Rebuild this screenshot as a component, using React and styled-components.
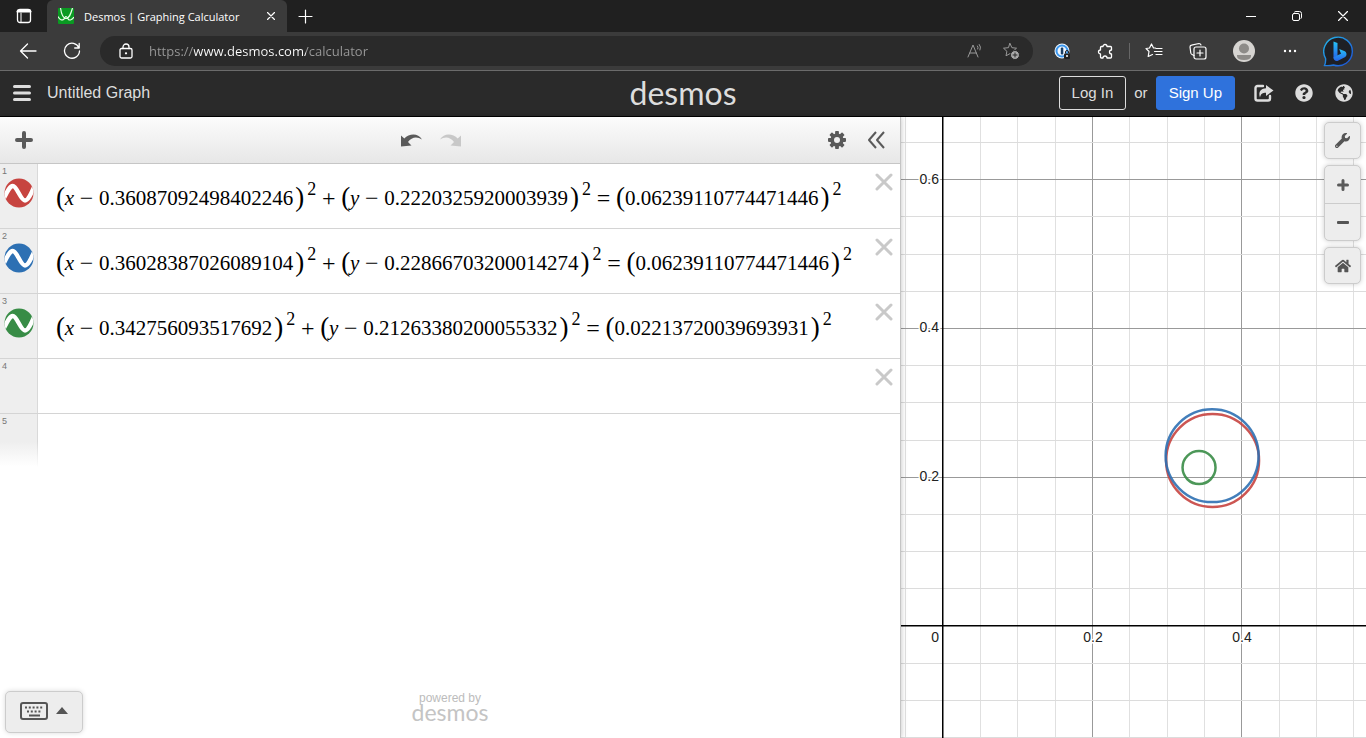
import React from "react";
import styled, { createGlobalStyle } from "styled-components";
import { FaWrench, FaHome, FaQuestionCircle, FaGlobeAmericas } from "react-icons/fa";

const GlobalStyle = createGlobalStyle`
  * { box-sizing: border-box; }
  body {
    margin: 0;
    background: #fff;
    font-family: "Liberation Sans", Arial, sans-serif;
  }
  button, input { font: inherit; color: inherit; }
`;

const Page = styled.div`
  display: flex;
  flex-direction: column;
  height: 100vh;
  overflow: hidden;
`;

/* ---------- browser window ---------- */

const TabStrip = styled.div`
  flex: none;
  display: flex;
  align-items: center;
  height: 32px;
  background: #202020;
  color: #fff;
  font-family: "Open Sans", "Noto Sans", sans-serif;
`;

const IconButton = styled.button`
  flex: none;
  display: flex;
  align-items: center;
  justify-content: center;
  width: ${(p) => p.$w || 46}px;
  height: ${(p) => p.$h || 32}px;
  padding: 0;
  border: 0;
  background: none;
  color: ${(p) => p.$color || "#fff"};
`;

const Tab = styled.div`
  display: flex;
  align-items: center;
  width: 240px;
  height: 32px;
  padding: 0 4px 0 11px;
  border-radius: 6px 6px 0 0;
  background: #3b3b3b;
`;

const TabTitle = styled.span`
  flex: 1;
  margin-left: 10px;
  font-size: 11px;
  white-space: nowrap;
`;

const Spacer = styled.div`
  flex: 1;
`;

const BrowserBar = styled.div`
  flex: none;
  display: flex;
  align-items: center;
  height: 39px;
  padding: 0 2px 0 6px;
  border-bottom: 1px solid #6b6b6b;
  background: #3b3b3b;
  color: #fff;
`;

const AddressBox = styled.div`
  flex: 1;
  display: flex;
  align-items: center;
  height: 30px;
  margin: 0 7px 0 6px;
  padding: 0 4px 0 8px;
  border-radius: 15px;
  background: #2a2a2a;
`;

const AddressInput = styled.input`
  flex: 1;
  min-width: 0;
  height: 30px;
  margin-left: 5px;
  padding: 0;
  border: 0;
  outline: 0;
  font-family: "Open Sans", "Noto Sans", sans-serif;
  font-size: 13px;
  background: linear-gradient(90deg, #9a9a9a 45px, #fff 45px, #fff 157px, #9a9a9a 157px);
  background-clip: text;
  -webkit-background-clip: text;
  -webkit-text-fill-color: transparent;
`;

const BarDivider = styled.div`
  width: 1px;
  height: 16px;
  margin: 0 2px;
  background: #666;
`;

/* ---------- calculator header ---------- */

const Header = styled.header`
  flex: none;
  display: grid;
  grid-template-columns: 1fr auto 1fr;
  align-items: center;
  height: 46px;
  padding: 0 12px 2px;
  border-bottom: 1px solid #000;
  background: #2a2a2a;
  color: #ddd;
`;

const HeaderLeft = styled.div`
  display: flex;
  align-items: center;
  margin-left: -9px;
`;

const GraphTitle = styled.h1`
  margin: 0 0 0 6px;
  font-size: 16px;
  font-weight: 400;
`;

const Wordmark = styled.div`
  font-family: Lato, "Open Sans", sans-serif;
  font-size: ${(p) => p.$size}px;
  line-height: ${(p) => p.$size - 6}px;
  color: ${(p) => p.$color};
`;

const HeaderRight = styled.div`
  display: flex;
  align-items: center;
  justify-content: flex-end;
  gap: 8px;
  font-size: 15px;
`;

const AccountButton = styled.button`
  height: 34px;
  padding: 0 12px;
  border: 1px solid ${(p) => (p.$primary ? "#2f72dc" : "#ddd")};
  border-radius: 3px;
  background: ${(p) => (p.$primary ? "#2f72dc" : "transparent")};
  color: ${(p) => (p.$primary ? "#fff" : "#ddd")};
`;

const HeaderIcons = styled.div`
  display: flex;
  align-items: center;
  gap: 20px;
  margin-left: 11px;
`;

/* ---------- expression panel ---------- */

const Workspace = styled.main`
  flex: 1;
  min-height: 0;
  display: grid;
  grid-template-columns: minmax(0, 901fr) minmax(0, 465fr);
`;

const Panel = styled.section`
  position: relative;
  z-index: 1;
  display: flex;
  flex-direction: column;
  border-right: 1px solid #c4c4c4;
  background: #fff;
  box-shadow: 0 0 6px rgba(0, 0, 0, 0.25);
`;

const PanelBar = styled.div`
  flex: none;
  display: grid;
  grid-template-columns: 1fr auto 1fr;
  align-items: center;
  height: 47px;
  padding: 0 5px;
  border-bottom: 1px solid #c6c6c6;
  background: linear-gradient(#fcfcfc, #e7e7e7);
`;

const BarGroup = styled.div`
  display: flex;
  gap: 1px;
  justify-content: ${(p) => p.$align || "flex-start"};
  padding-right: ${(p) => (p.$offset ? 38 : 0)}px;
`;

const Rows = styled.ol`
  flex: 1;
  margin: 0;
  padding: 0;
  list-style: none;
`;

const Row = styled.li`
  display: flex;
  height: ${(p) => (p.$filled ? 65 : 55)}px;
  border-bottom: ${(p) => (p.$last ? "0" : "1px solid #d4d4d4")};
`;

const Gutter = styled.div`
  flex: none;
  width: 38px;
  padding: 2px 0 0 2px;
  border-right: 1px solid #d9d9d9;
  background: ${(p) =>
    p.$fade ? "linear-gradient(#eee 50%, #fff 95%)" : "#eee"};
  color: #777;
  font-size: 9px;
  line-height: 10px;
  ${(p) => p.$fade && "border-image: linear-gradient(#d9d9d9 50%, #fff 95%) 1;"}
`;

const CurveButton = styled.button`
  display: block;
  width: 32px;
  height: 32px;
  margin-top: 1px;
  padding: 1px 0 0 1px;
  border: 0;
  background: none;
`;

const Formula = styled.div`
  flex: 1;
  display: flex;
  align-items: center;
  padding: 3px 0 0 18px;
  font-family: "Liberation Serif", "Times New Roman", serif;
  font-size: 21px;
  line-height: 24px;
  color: #000;
  white-space: nowrap;
`;

const Paren = styled.span`
  width: ${(p) => (p.$close ? 9 : 8)}px;
  margin-right: ${(p) => (p.$close ? 3 : 0)}px;
  margin-bottom: 2px;
  font-size: 27px;
`;

const Variable = styled.i`
  width: 11px;
  text-align: center;
`;

const Operator = styled.span`
  width: ${(p) => p.$w || 23}px;
  font-size: 24px;
  text-align: center;
`;

const Value = styled.span`
  padding: 0 2px 0 1px;
`;

const Power = styled.sup`
  align-self: flex-start;
  margin-top: 12px;
  font-size: 18px;
  line-height: 20px;
`;

const EmptyInput = styled.input`
  flex: 1;
  min-width: 0;
  padding: 0 18px;
  border: 0;
  outline: 0;
  background: none;
`;

const PoweredBy = styled.div`
  display: flex;
  flex-direction: column;
  align-items: center;
  padding-bottom: 17px;
  color: #bcbcbc;
  font-size: 12px;
  line-height: 12px;
`;

const KeypadButton = styled.button`
  position: absolute;
  left: 5px;
  bottom: 5px;
  display: flex;
  align-items: center;
  gap: 8px;
  width: 78px;
  height: 42px;
  padding: 0 14px 3px;
  border: 1px solid #ccc;
  border-radius: 5px;
  background: #ededed;
  box-shadow: 0 0 5px rgba(0, 0, 0, 0.15);
`;

/* ---------- graph paper ---------- */

const GraphArea = styled.section`
  position: relative;
  overflow: hidden;
  background: #fff;
`;

const Plot = styled.svg`
  display: block;
  width: 100%;
  height: 100%;
`;

const GraphTools = styled.div`
  position: absolute;
  top: 5px;
  right: 5px;
  display: flex;
  flex-direction: column;
  gap: 6px;
`;

const ToolGroup = styled.div`
  border: 1px solid #ccc;
  border-radius: 5px;
  background: #ededed;
  box-shadow: 0 0 5px rgba(0, 0, 0, 0.2);
  button + button { border-top: 1px solid #ccc; }
`;

const ToolButton = styled.button`
  display: flex;
  align-items: center;
  justify-content: center;
  width: 35px;
  height: ${(p) => p.$h || 35}px;
  padding: 0;
  border: 0;
  background: none;
  color: #555;
`;

/* ---------- icons ---------- */

const Line = ({ size = 18, w = 1, children, box = 18, ...rest }) => (
  <svg width={size} height={size} viewBox={`0 0 ${box} ${box}`} fill="none"
    stroke="currentColor" strokeWidth={w} strokeLinecap="round" strokeLinejoin="round" aria-hidden="true" {...rest}>
    {children}
  </svg>
);

const Favicon = () => (
  <svg width="16" height="16" viewBox="0 0 16 16" aria-hidden="true">
    <rect width="16" height="16" rx="1" fill="#0a9a22" />
    <path d="M2.500 0C3.500 7 5 10.500 8 10.500S12.500 7 14.500 0M0 8.500C2 12 4 12.500 5.500 11.500S7 8.500 8 8.500S9.500 10.500 10.500 11.500S14 12 16 9" fill="none" stroke="#e8ffe8" strokeWidth="1.200" />
  </svg>
);

const TabsIcon = () => (
  <Line size={16} box={16} w={1.3}>
    <rect x="1.500" y="1.500" width="13" height="13" rx="2.500" />
    <path d="M1.500 3.500h13M2 2.500h12" strokeWidth="2.200" />
    <path d="M5 5v9" strokeWidth="1" />
  </Line>
);

const star = "M8 1.500l1.900 4.200 4.600.5-3.400 3.100.9 4.500L8 11.600l-4 2.200.9-4.500L1.500 6.200l4.600-.5z";

const BingIcon = () => (
  <svg width="31" height="31" viewBox="0 0 31 31" aria-hidden="true">
    <defs>
      <linearGradient id="ring" x1="0" y1="0" x2="1" y2="1">
        <stop offset="0" stopColor="#23b5e8" />
        <stop offset="1" stopColor="#1d4fd7" />
      </linearGradient>
      <linearGradient id="mark" x1="0" y1="0" x2="0" y2="1">
        <stop offset="0" stopColor="#27c3f5" />
        <stop offset="1" stopColor="#2563eb" />
      </linearGradient>
    </defs>
    <path d="M1.500 29.500C2.600 27 2.800 25 2.600 22.500A14.300 14.300 0 1 1 10.500 29C8 29.600 5 29.800 1.500 29.500z" fill="#1e2026" stroke="url(#ring)" strokeWidth="1.400" />
    <path d="M10.500 5.500l4 1.600v12.400l-4 3z" fill="url(#mark)" />
    <path d="M10.500 21.500l4-2.200 3.500-1.500-1.800-4.800 5 2c2.600 1 3.200 4.300 1 6L15 24.800c-2.200.9-4.500-.8-4.500-3.300z" fill="url(#mark)" />
  </svg>
);

const GearIcon = () => (
  <svg width="18" height="18" viewBox="-9 -9 18 18" aria-hidden="true">
    {[0, 45, 90, 135].map((a) => (
      <rect key={a} x="-1.900" y="-9" width="3.800" height="18" rx="0.800" fill="#5a5a5a" transform={`rotate(${a})`} />
    ))}
    <circle r="6.600" fill="#5a5a5a" />
    <circle r="3" fill="#f1f1f1" />
  </svg>
);

const ArrowIcon = ({ flip, color }) => (
  <svg width="21" height="13" viewBox="0 0 21 13" aria-hidden="true">
    <path d="M0 1.500L3.300 4.500C8-.5 17-1.500 21 5.500C16 2 10.500 3 7 8L10.500 11.500L0 12.500z" fill={color}
      transform={flip ? "translate(21 0) scale(-1 1)" : undefined} />
  </svg>
);

const PlusIcon = ({ size, w }) => (
  <svg width={size} height={size} viewBox={`0 0 ${size} ${size}`} stroke="#5a5a5a" strokeWidth={w} strokeLinecap="round" aria-hidden="true">
    <path d={`M${size / 2} ${w / 2}V${size - w / 2}M${w / 2} ${size / 2}H${size - w / 2}`} />
  </svg>
);

const CurveIcon = ({ color, id }) => (
  <svg width="30" height="30" viewBox="0 0 30 30" aria-hidden="true">
    <clipPath id={id}><circle cx="15" cy="15" r="14.500" /></clipPath>
    <circle cx="15" cy="15" r="14.500" fill={color} />
    <path clipPath={`url(#${id})`} d="M0 20C4 12 6 8 8.800 8C13 8 16.500 22.500 21 22.500C24 22.500 26.500 17 30 9" fill="none" stroke="#fff" strokeWidth="4.300" />
  </svg>
);

const ShareIcon = () => (
  <svg width="20" height="18" viewBox="0 0 20 18" aria-hidden="true">
    <path d="M9 2H3.500A2 2 0 0 0 1.500 4v10.500a2 2 0 0 0 2 2h10.500a2 2 0 0 0 2-2V12" fill="none" stroke="#ddd" strokeWidth="2.400" strokeLinecap="round" />
    <path d="M12 1l7.500 5.500L12 12V8.800C8.500 8.800 6.800 9.800 6 13.500C4 8 6.800 4.300 12 4.200z" fill="#ddd" />
  </svg>
);

const KeyboardIcon = () => (
  <svg width="28" height="18" viewBox="0 0 28 18" aria-hidden="true">
    <rect x="1" y="1" width="26" height="16" rx="2" fill="none" stroke="#555" strokeWidth="2" />
    <path d="M5 5.500h19M7 9.500h15" stroke="#555" strokeWidth="2" strokeDasharray="2 1.800" />
    <path d="M9 13.500h11" stroke="#555" strokeWidth="2" />
  </svg>
);

const DeleteButton = () => (
  <IconButton $w={32} $h={36} $color="#c9c9c9" aria-label="Delete expression">
    <Line size={18} box={18} w={3}><path d="M2 2l14 14M16 2L2 16" /></Line>
  </IconButton>
);

/* ---------- data ---------- */

const circles = [
  { color: "#c74440", cx: "0.36087092498402246", cy: "0.2220325920003939", r: "0.06239110774471446" },
  { color: "#2d70b3", cx: "0.36028387026089104", cy: "0.22866703200014274", r: "0.06239110774471446" },
  { color: "#388c46", cx: "0.342756093517692", cy: "0.21263380200055332", r: "0.02213720039693931" },
];

const Squared = ({ name, value }) => (
  <>
    <Paren>(</Paren>
    {name && <><Variable>{name}</Variable><Operator>−</Operator></>}
    <Value>{value}</Value>
    <Paren $close>)</Paren>
    <Power>2</Power>
  </>
);

const UNIT = 745;
const ORIGIN = { x: 42, y: 509 };
const steps = (from, to) => Array.from({ length: to - from + 1 }, (_, i) => from + i);

function GraphPaper() {
  return (
    <Plot role="img" aria-label="Graph of three circles">
      <g shapeRendering="crispEdges">
        {steps(-1, 60).map((n) => n !== 0 && (
          <rect key={`v${n}`} x={Math.floor(ORIGIN.x + n * 37.36)} y="0" width="1" height="100%" fill={n % 4 ? "#e0e0e0" : "#999"} />
        ))}
        {steps(-30, 13).map((n) => n !== 0 && (
          <rect key={`h${n}`} x="0" y={Math.floor(ORIGIN.y - n * 37.2)} width="100%" height="1" fill={n % 4 ? "#dcdcdc" : "#999"} />
        ))}
      </g>
      <rect x={ORIGIN.x - 1} y="0" width="1.500" height="100%" fill="#000" />
      <rect x="0" y={ORIGIN.y - 1} width="100%" height="1.500" fill="#000" />
      {circles.map((c) => (
        <circle key={c.cx} cx={ORIGIN.x + c.cx * (UNIT + 2)} cy={ORIGIN.y - c.cy * UNIT} r={c.r * UNIT}
          fill="none" stroke={c.color} strokeWidth="2.500" strokeOpacity="0.900" />
      ))}
      <g fontFamily="Liberation Sans, Arial, sans-serif" fontSize="14" fill="#222" stroke="#fff" strokeWidth="3" paintOrder="stroke">
        <text x="38" y="525" textAnchor="end">0</text>
        <text x="192" y="525" textAnchor="middle">0.2</text>
        <text x="341" y="525" textAnchor="middle">0.4</text>
        <text x="38" y="364" textAnchor="end">0.2</text>
        <text x="38" y="215" textAnchor="end">0.4</text>
        <text x="38" y="67" textAnchor="end">0.6</text>
      </g>
    </Plot>
  );
}

export default function App() {
  return (
    <Page>
      <GlobalStyle />
      <TabStrip>
        <IconButton $w={47} aria-label="Tab actions"><TabsIcon /></IconButton>
        <Tab>
          <Favicon />
          <TabTitle>Desmos | Graphing Calculator</TabTitle>
          <IconButton $w={24} $h={24} aria-label="Close tab">
            <Line size={8} box={8} w={1.2}><path d="M.5.5l7 7M7.500.5l-7 7" /></Line>
          </IconButton>
        </Tab>
        <IconButton $w={36} aria-label="New tab">
          <Line size={15} box={15} w={1.2}><path d="M7.500 1v13M1 7.500h13" /></Line>
        </IconButton>
        <Spacer />
        <IconButton aria-label="Minimize"><Line size={10} box={10}><path d="M0 5.500h10" /></Line></IconButton>
        <IconButton aria-label="Restore">
          <Line size={10} box={10}><rect x="0.500" y="2.500" width="7" height="7" rx="1.500" /><path d="M2.500 1Q3 .5 4 .5h3.500a2 2 0 0 1 2 2V6Q9.500 7 9 7.500" /></Line>
        </IconButton>
        <IconButton aria-label="Close"><Line size={10} box={10} w={1.2}><path d="M.5.5l9 9M9.500.5l-9 9" /></Line></IconButton>
      </TabStrip>

      <BrowserBar>
        <IconButton $w={44} aria-label="Back"><Line w={1.3}><path d="M17 9H1.500M8.500 2L1.500 9l7 7" /></Line></IconButton>
        <IconButton $w={44} aria-label="Reload">
          <Line w={1.3}><path d="M16 6A7.500 7.500 0 1 0 16.500 9M16.200 1.500V6h-4.500" /></Line>
        </IconButton>
        <AddressBox>
          <IconButton $w={36} $h={28} aria-label="Site information">
            <Line size={16} box={16} w={1.3}>
              <rect x="2" y="5.500" width="12" height="9.500" rx="1.500" /><path d="M5 5.500V4a3 3 0 0 1 6 0v1.500" /><circle cx="8" cy="10.300" r="0.500" fill="#fff" />
            </Line>
          </IconButton>
          <AddressInput aria-label="Address" type="text" defaultValue="https://www.desmos.com/calculator" />
          <IconButton $w={36} $h={28} $color="#999" aria-label="Read aloud">
            <Line size={16} box={16}><path d="M1 14L6 2l5 12M2.800 10h6.500M10.500 3Q11.500 4.500 10.800 6M12.300 1.500Q14.500 4 13 7" /></Line>
          </IconButton>
          <IconButton $w={36} $h={28} $color="#999" aria-label="Add to favorites">
            <Line size={18} box={18}><path d={star} /><circle cx="13" cy="13" r="4.500" fill="#aaa" stroke="#2a2a2a" /><path d="M13 11v4M11 13h4" stroke="#2a2a2a" /></Line>
          </IconButton>
        </AddressBox>
        <IconButton $w={44} aria-label="Password manager">
          <svg width="17" height="17" viewBox="0 0 17 17" aria-hidden="true">
            <circle cx="8" cy="8" r="7.500" fill="#eef6ff" />
            <circle cx="8" cy="8" r="5.500" fill="none" stroke="#3b97ee" strokeWidth="2" />
            <rect x="6.800" y="4.500" width="2.500" height="7" rx="1" fill="#173d65" />
            <rect x="10" y="10.500" width="6" height="5.500" rx="1" fill="#222" />
            <path d="M11.500 10.500V9a1.500 1.500 0 0 1 3 0v1.500" fill="none" stroke="#222" />
            <circle cx="13" cy="13" r="1" fill="#fff" />
          </svg>
        </IconButton>
        <IconButton $w={43} aria-label="Extensions">
          <Line size={17} box={17} w={1.3}><path d="M6 3.500a2 2 0 0 1 4 0h3.500A1 1 0 0 1 14.500 4.500V7a2 2 0 0 0 0 4v3a1 1 0 0 1-1 1H10a2 2 0 0 0-4 0H4.500a1 1 0 0 1-1-1v-3a2 2 0 0 1 0-4V4.500a1 1 0 0 1 1-1z" /></Line>
        </IconButton>
        <BarDivider />
        <IconButton $w={44} aria-label="Favorites">
          <Line size={18} box={18} w={1.2}><path d="M10.500 6L8.500 6 6.500 2l-2 4L1 6.500l3 3-.8 5L7.500 12.500M11 6.500h6M9.500 9.500H17M11 12.500h6" /></Line>
        </IconButton>
        <IconButton $w={44} aria-label="Collections">
          <Line size={18} box={18} w={1.2}><path d="M5 13.500L3 12.500Q2 12 1.800 11L1 5Q1 3.500 2.500 3.200L10 1.500Q11.500 1.500 12 3" /><rect x="5" y="5" width="12" height="12" rx="2" /><path d="M11 8v6M8 11h6" /></Line>
        </IconButton>
        <IconButton $w={48} aria-label="Profile">
          <svg width="22" height="22" viewBox="0 0 22 22" aria-hidden="true">
            <clipPath id="face"><circle cx="11" cy="11" r="11" /></clipPath>
            <circle cx="11" cy="11" r="11" fill="#d6d4d1" />
            <g clipPath="url(#face)" fill="#8d8b88"><circle cx="11" cy="8.500" r="5" /><path d="M4 15h14v1q0 4-7 4t-7-4z" /></g>
          </svg>
        </IconButton>
        <IconButton $w={44} aria-label="More">
          <Line size={16} box={16} w={0}><g fill="#fff"><circle cx="3" cy="8" r="1.200" /><circle cx="8" cy="8" r="1.200" /><circle cx="13" cy="8" r="1.200" /></g></Line>
        </IconButton>
        <IconButton $w={52} aria-label="Bing"><BingIcon /></IconButton>
      </BrowserBar>

      <Header>
        <HeaderLeft>
          <IconButton $w={38} $color="#ddd" aria-label="Open menu">
            <Line size={18} box={18} w={3}><path d="M1.500 2.500h15M1.500 9h15M1.500 15.500h15" /></Line>
          </IconButton>
          <GraphTitle>Untitled Graph</GraphTitle>
        </HeaderLeft>
        <Wordmark $size={32} $color="#ddd">desmos</Wordmark>
        <HeaderRight>
          <AccountButton>Log In</AccountButton>
          <span>or</span>
          <AccountButton $primary>Sign Up</AccountButton>
          <HeaderIcons>
            <IconButton $w={20} $h={20} aria-label="Share"><ShareIcon /></IconButton>
            <IconButton $w={20} $h={20} $color="#ddd" aria-label="Help"><FaQuestionCircle size={18} /></IconButton>
            <IconButton $w={20} $h={20} $color="#ddd" aria-label="Language"><FaGlobeAmericas size={18} /></IconButton>
          </HeaderIcons>
        </HeaderRight>
      </Header>

      <Workspace>
        <Panel>
          <PanelBar>
            <BarGroup><IconButton $w={38} aria-label="Add item"><PlusIcon size={18} w={4} /></IconButton></BarGroup>
            <BarGroup $offset>
              <IconButton $w={38} aria-label="Undo"><ArrowIcon color="#5a5a5a" /></IconButton>
              <IconButton $w={38} aria-label="Redo"><ArrowIcon flip color="#c8c8c8" /></IconButton>
            </BarGroup>
            <BarGroup $align="flex-end">
              <IconButton $w={38} aria-label="Edit list"><GearIcon /></IconButton>
              <IconButton $w={38} $color="#5a5a5a" aria-label="Hide list">
                <Line size={18} box={18} w={2}><path d="M9 1L2 9l7 8M17 1L10 9l7 8" strokeLinecap="butt" /></Line>
              </IconButton>
            </BarGroup>
          </PanelBar>
          <Rows>
            {circles.map((c, i) => (
              <Row key={c.cx} $filled>
                <Gutter>
                  {i + 1}
                  <CurveButton aria-label="Hide curve"><CurveIcon color={c.color} id={`curve${i}`} /></CurveButton>
                </Gutter>
                <Formula>
                  <Squared name="x" value={c.cx} />
                  <Operator $w={25}>+</Operator>
                  <Squared name="y" value={c.cy} />
                  <Operator $w={25}>=</Operator>
                  <Squared value={c.r} />
                </Formula>
                <DeleteButton />
              </Row>
            ))}
            <Row>
              <Gutter>4</Gutter>
              <EmptyInput type="text" aria-label="Expression 4" />
              <DeleteButton />
            </Row>
            <Row $last><Gutter $fade>5</Gutter></Row>
          </Rows>
          <PoweredBy>
            <span>powered by</span>
            <Wordmark $size={23} $color="#c4c4c4">desmos</Wordmark>
          </PoweredBy>
          <KeypadButton aria-label="Show keypad">
            <KeyboardIcon />
            <svg width="12" height="7" viewBox="0 0 12 7" aria-hidden="true"><path d="M6 0l6 7H0z" fill="#555" /></svg>
          </KeypadButton>
        </Panel>
        <GraphArea>
          <GraphPaper />
          <GraphTools>
            <ToolGroup><ToolButton aria-label="Graph settings"><FaWrench size={15} /></ToolButton></ToolGroup>
            <ToolGroup>
              <ToolButton $h={37} aria-label="Zoom in"><PlusIcon size={12} w={3} /></ToolButton>
              <ToolButton $h={37} aria-label="Zoom out">
                <svg width="12" height="3" viewBox="0 0 12 3" aria-hidden="true"><rect width="12" height="3" rx="1" fill="#555" /></svg>
              </ToolButton>
            </ToolGroup>
            <ToolGroup><ToolButton aria-label="Default viewport"><FaHome size={16} /></ToolButton></ToolGroup>
          </GraphTools>
        </GraphArea>
      </Workspace>
    </Page>
  );
}
